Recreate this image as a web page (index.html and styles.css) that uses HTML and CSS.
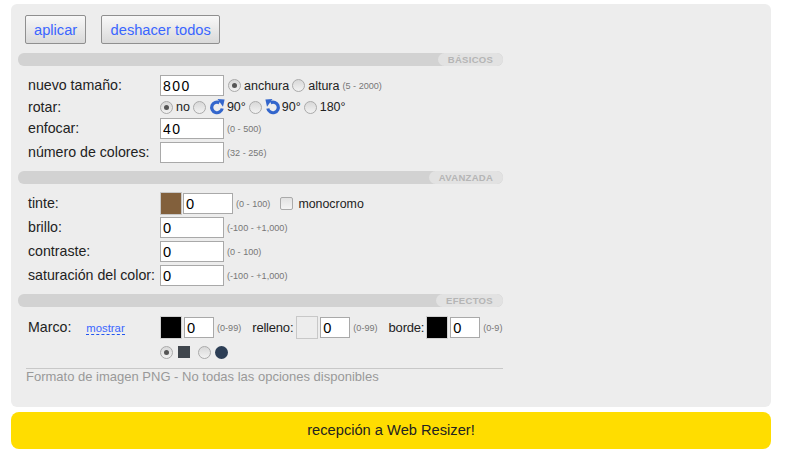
FILE: index.html
```html
<!DOCTYPE html>
<html lang="es">
<head>
  <meta charset="UTF-8" />
  <title>Web Resizer</title>
  <link rel="stylesheet" href="styles.css">
</head>
<body>
  <div class="panel">
    <div class="actions">
      <button class="btn">aplicar</button>
      <button class="btn btn-wide">deshacer todos</button>
    </div>

    <div class="section-bar"><span class="section-tag tag-basic">BÁSICOS</span></div>
    <div class="rows rows-basic">
      <div class="row row-field row-first">
        <label class="name">nuevo tamaño:</label>
        <input class="field spaced" type="text" value="800" />
        <span class="radio on first"></span><span class="opt">anchura</span>
        <span class="radio"></span><span class="opt">altura</span>
        <span class="hint">(5 - 2000)</span>
      </div>
      <div class="row row-rotate">
        <label class="name">rotar:</label>
        <span class="radio on"></span><span class="opt">no</span>
        <span class="radio"></span>
        <svg class="rot rot-right" width="16" height="16" viewBox="0 0 16 16"><path d="M13.2 9.5A5.3 5.3 0 1 1 10.4 3.7" fill="none" stroke="#3366cc" stroke-width="3.2"/><path d="M8.5 0L15.6 .6L14 7.8Z" fill="#3366cc"/></svg>
        <span class="opt">90°</span>
        <span class="radio"></span>
        <svg class="rot" width="16" height="16" viewBox="0 0 16 16"><path d="M2.8 9.5A5.3 5.3 0 1 0 5.6 3.7" fill="none" stroke="#3366cc" stroke-width="3.2"/><path d="M7.5 0L.4 .6L2 7.8Z" fill="#3366cc"/></svg>
        <span class="opt">90°</span>
        <span class="radio"></span><span class="opt">180°</span>
      </div>
      <div class="row row-field">
        <label class="name">enfocar:</label>
        <input class="field spaced" type="text" value="40" />
        <span class="hint">(0 - 500)</span>
      </div>
      <div class="row row-field">
        <label class="name">número de colores:</label>
        <input class="field" type="text" />
        <span class="hint">(32 - 256)</span>
      </div>
    </div>

    <div class="section-bar"><span class="section-tag tag-adv">AVANZADA</span></div>
    <div class="rows rows-adv">
      <div class="row row-field">
        <label class="name">tinte:</label>
        <span class="swatch swatch-brown"></span>
        <input class="field field-mid" type="text" value="0" />
        <span class="hint">(0 - 100)</span>
        <span class="check"></span><span class="opt opt-mono">monocromo</span>
      </div>
      <div class="row row-field">
        <label class="name">brillo:</label>
        <input class="field" type="text" value="0" />
        <span class="hint">(-100 - +1,000)</span>
      </div>
      <div class="row row-field">
        <label class="name">contraste:</label>
        <input class="field" type="text" value="0" />
        <span class="hint">(0 - 100)</span>
      </div>
      <div class="row row-field">
        <label class="name">saturación del color:</label>
        <input class="field" type="text" value="0" />
        <span class="hint">(-100 - +1,000)</span>
      </div>
    </div>

    <div class="section-bar"><span class="section-tag tag-fx">EFECTOS</span></div>
    <div class="frame">
      <div class="row frame-row">
        <label class="name name-frame">Marco:<a class="show-link" href="#">mostrar</a></label>
        <span class="swatch swatch-black"></span>
        <input class="field field-small" type="text" value="0" />
        <span class="hint">(0-99)</span>
        <span class="frame-label">relleno:</span>
        <span class="swatch swatch-empty"></span>
        <input class="field field-small" type="text" value="0" />
        <span class="hint">(0-99)</span>
        <span class="frame-label label-border">borde:</span>
        <span class="swatch swatch-black"></span>
        <input class="field field-small" type="text" value="0" />
        <span class="hint">(0-9)</span>
      </div>
      <div class="row shape-row">
        <span class="radio on"></span><span class="shape-square"></span>
        <span class="radio shape-gap"></span><span class="shape-circle"></span>
      </div>
    </div>
    <p class="note">Formato de imagen PNG - No todas las opciones disponibles</p>
  </div>

  <div class="welcome">recepción a Web Resizer!</div>
</body>
</html>
```

FILE: styles.css
```css
html, body {
  margin: 0;
  padding: 0;
}

body {
  background: #fff;
  color: #222;
  font-family: "Liberation Sans", Arial, sans-serif;
  font-size: 14.2px;
  padding: 4px 16px 0 11px;
  height: 459px;
  box-sizing: border-box;
  overflow: hidden;
}

.panel {
  width: 760px;
  height: 403px;
  background: #ededed;
  border-radius: 6px;
  padding: 11px 0 0 7px;
  box-sizing: border-box;
}

.actions {
  display: flex;
  gap: 15px;
  padding-left: 7px;
  margin-bottom: 9px;
}

.btn {
  height: 29px;
  padding: 0 8px;
  border: 1px solid #8f8f8f;
  border-radius: 2px;
  background: linear-gradient(#f8f8f8, #d9d9d9);
  color: #3a66ff;
  font-family: inherit;
  font-size: 14.67px;
}

.btn-wide {
  width: 119px;
}

.section-bar {
  width: 485px;
  height: 13px;
  background: #d2d2d2;
  border-radius: 6px;
  display: flex;
  justify-content: flex-end;
}

.section-tag {
  background: #e2e2e2;
  border-radius: 7px;
  color: #b5b5b5;
  font-size: 9.5px;
  font-weight: bold;
  line-height: 13px;
  text-align: center;
  letter-spacing: 0.3px;
}

.tag-basic { width: 65px; }
.tag-adv { width: 74px; }
.tag-fx { width: 67px; }

.rows {
  padding-left: 10px;
}

.rows-basic {
  padding-top: 9px;
  height: 96px;
}

.rows-adv {
  padding-top: 9px;
  height: 101px;
}

.row {
  display: flex;
  align-items: center;
}

.row-field {
  height: 21px;
  margin-bottom: 3px;
}

.row-first {
  margin-bottom: 0;
}

.row-rotate {
  height: 22px;
}

.name {
  width: 132px;
  flex: none;
  white-space: nowrap;
  margin-top: -1px;
}

.field {
  width: 64px;
  height: 21px;
  border: 1px solid #a9a9a9;
  background: #fff;
  padding: 0 0 0 2px;
  margin: 0;
  box-sizing: border-box;
  font-family: inherit;
  font-size: 14.67px;
  color: #000;
}

.spaced {
  font-size: 14px;
  letter-spacing: 1.5px;
}

.field-mid {
  width: 50px;
  margin-left: 1px;
}

.field-small {
  width: 30px;
  margin-left: 2px;
}

.hint {
  font-size: 9.1px;
  color: #777;
  margin-left: 3px;
}

.opt {
  font-size: 12.5px;
  margin-left: 3px;
  color: #222;
}

.opt-mono {
  font-size: 12.4px;
}

.radio {
  width: 11px;
  height: 11px;
  border: 1px solid #aaa;
  border-radius: 50%;
  background: linear-gradient(#d8d8d8, #f2f2f2);
  flex: none;
  margin-left: 3px;
  position: relative;
}

.row-rotate .radio:first-of-type {
  margin-left: 0;
}

.radio.first {
  margin-left: 4px;
}

.radio.on::after {
  content: "";
  position: absolute;
  left: 3px;
  top: 3px;
  width: 5px;
  height: 5px;
  border-radius: 50%;
  background: #555;
}

.rot {
  flex: none;
  margin-left: 3px;
  margin-right: -2px;
}

.rot-right {
  margin-right: -1px;
}

.check {
  width: 11px;
  height: 11px;
  border: 1px solid #aaa;
  border-radius: 2px;
  background: linear-gradient(#e2e2e2, #f4f4f4);
  margin-left: 10px;
  margin-right: 2px;
}

.swatch {
  width: 22px;
  height: 23px;
  flex: none;
  border: 1px solid #c8c8c8;
  box-sizing: border-box;
}

.swatch-brown { background: #82603c; }
.swatch-black { background: #000; border-color: #d0d0d0; }
.swatch-empty { background: #ededed; }

.frame {
  padding: 9px 0 0 10px;
}

.name-frame {
  display: flex;
  align-items: center;
}

.show-link {
  font-size: 11.3px;
  color: #3a66ff;
  text-decoration: none;
  border-bottom: 1px dashed #2255ee;
  margin-left: 15px;
  margin-top: 3px;
}

.frame-label {
  margin-left: 11px;
  margin-right: 3px;
  font-size: 13px;
  letter-spacing: -0.2px;
}

.label-border {
  margin-right: 2px;
}

.frame-row {
  height: 23px;
}

.shape-row {
  padding-left: 132px;
  margin-top: 5px;
  height: 16px;
}

.shape-row .radio {
  margin-left: 0;
}

.shape-square {
  width: 12px;
  height: 12px;
  background: #40464d;
  margin-left: 5px;
}

.shape-row .shape-gap {
  margin-left: 8px;
}

.shape-circle {
  width: 13px;
  height: 13px;
  border-radius: 50%;
  background: #2c3e55;
  margin-left: 4px;
}

.note {
  width: 477px;
  margin: 8px 0 0 8px;
  border-top: 1px solid #c8c8c8;
  color: #999;
  font-size: 13px;
  line-height: 16px;
}

.welcome {
  width: 760px;
  height: 37px;
  margin-top: 5px;
  background: #ffdd00;
  border-radius: 8px;
  text-align: center;
  line-height: 37px;
  font-size: 14.67px;
  color: #222;
}
```
